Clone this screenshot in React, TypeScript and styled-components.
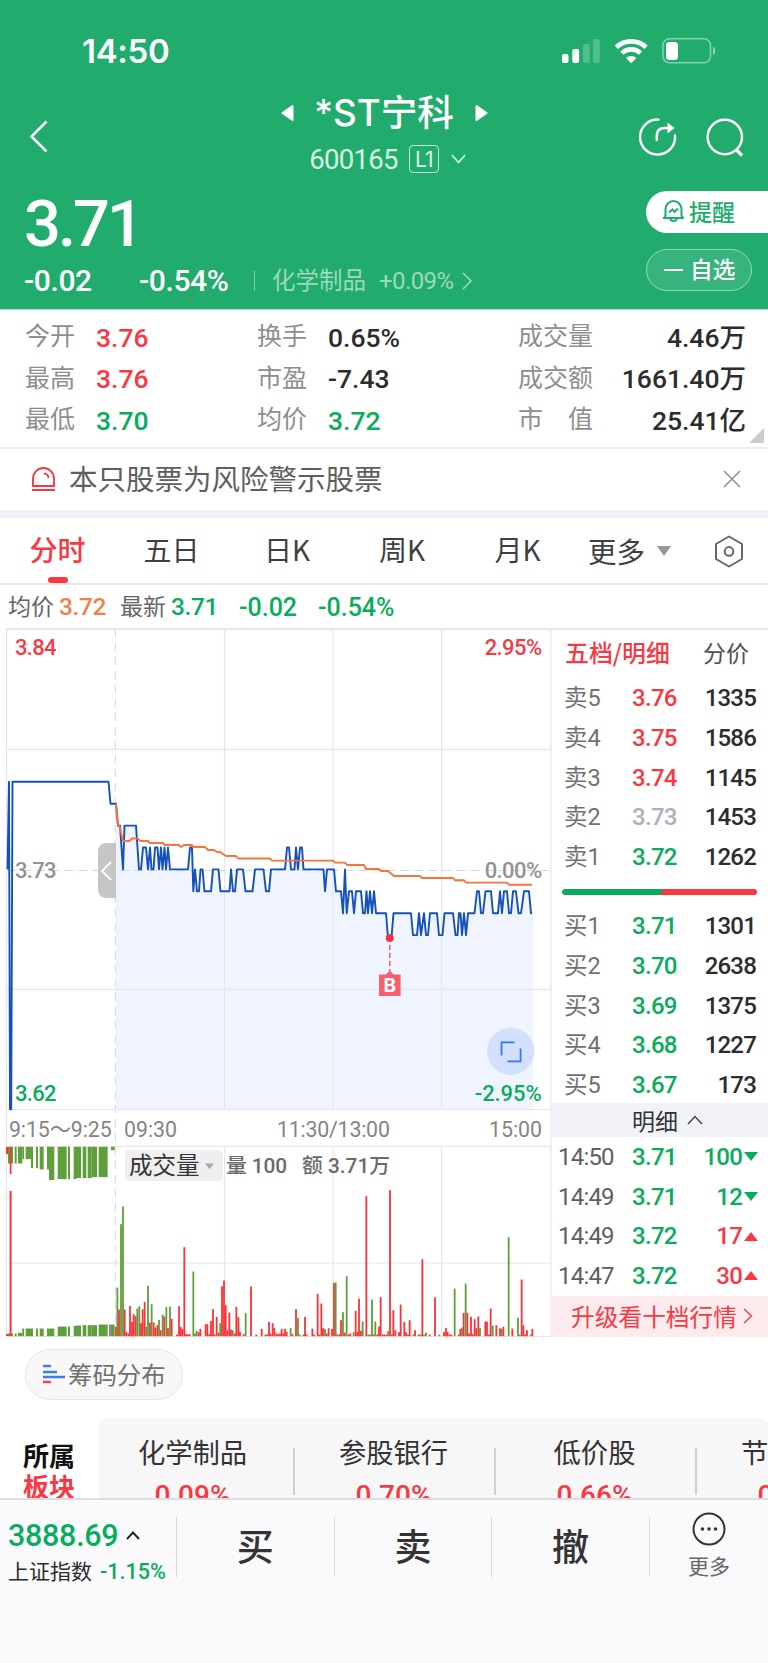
import React from "react";
import styled, { createGlobalStyle } from "styled-components";

const C = {
  green: "#21ac6e",
  up: "#fa3843",
  down: "#08ac5c",
  ink: "#2c2c2c",
  sub: "#666666",
  mute: "#8e8e8e",
  flat: "#a9b1bf",
  line: "#e6e6e6",
};
const CJK = `"Noto Sans CJK SC", sans-serif`;
const NUM = `Roboto, "Noto Sans CJK SC", sans-serif`;

const Global = createGlobalStyle`
  * { box-sizing: border-box; }
  body { margin: 0; background: #fff; font-family: ${CJK}; color: ${C.ink}; }
  svg { display: block; flex: none; }
`;

const Page = styled.main`
  width: 768px;
  height: 1663px;
  overflow: hidden;
  display: flex;
  flex-direction: column;
  background: #fff;
`;

/* Shared number text */
const Num = styled.span<{ $size: number; $color?: string; $weight?: number; $gap?: number }>`
  font-family: ${NUM};
  font-size: ${(p) => p.$size}px;
  line-height: 1;
  font-weight: ${(p) => p.$weight ?? 500};
  letter-spacing: ${(p) => p.$gap ?? 0}px;
  color: ${(p) => p.$color ?? C.ink};
  white-space: nowrap;
`;

/* Header */
const Header = styled.header`
  height: 310px;
  flex: none;
  background: ${C.green};
  color: #fff;
  border-bottom: 1px solid #a8e6cb;
`;
const StatusBar = styled.div`
  height: 88px;
  padding: 14px 51px 0 82px;
  display: flex;
  align-items: center;
  justify-content: space-between;
`;
const Clock = styled.span`
  font: 600 33px/1 Inter, sans-serif;
  letter-spacing: -0.3px;
  padding-top: 1px;
`;
const NavBar = styled.div`
  height: 97px;
  padding: 0 23px 0 29px;
  display: grid;
  grid-template-columns: 119px 1fr 107px;
`;
const NavSide = styled.div`
  display: flex;
  align-items: center;
  justify-content: space-between;
`;
const TitleBlock = styled.div`
  display: flex;
  flex-direction: column;
  align-items: center;
  padding-right: 18px;
`;
const TitleRow = styled.div`
  height: 49px;
  display: flex;
  align-items: center;
  gap: 20px;
`;
const Title = styled.h1`
  margin: 0;
  width: 141px;
  display: flex;
  justify-content: center;
  font: 500 36.7px/49px Inter, ${CJK};
  white-space: nowrap;
`;
const CodeRow = styled.div`
  height: 44px;
  padding: 1px 0 0 7px;
  display: flex;
  align-items: center;
  color: #d9f3e6;
`;
const LevelTag = styled.span`
  width: 30px;
  height: 28px;
  margin: -2px 12px 0 11px;
  border: 1px solid #c9ecdb;
  border-radius: 4px;
  font: 400 21px/27px Inter, sans-serif;
  letter-spacing: -1px;
  text-align: center;
`;
const Quote = styled.div`
  display: grid;
  grid-template-columns: 1fr 122px;
`;
const QuoteMain = styled.div`
  padding-left: 24px;
  display: flex;
  flex-direction: column;
`;
const LastPrice = styled.div`
  height: 76px;
  padding-top: 3px;
  display: flex;
  align-items: center;
`;
const ChangeRow = styled.div`
  height: 40px;
  display: flex;
  align-items: center;
`;
const ChangeCell = styled.div<{ $w: number }>`
  width: ${(p) => p.$w}px;
  flex: none;
`;
const Sector = styled.div`
  border-left: 1px solid #7ccfa7;
  height: 20px;
  padding-left: 17px;
  display: flex;
  align-items: center;
  color: #9bdabc;
`;
const SectorName = styled.span`
  width: 107px;
  font-size: 23.5px;
  line-height: 1;
  margin-top: -2px;
`;
const Actions = styled.div`
  padding-top: 6px;
  display: flex;
  flex-direction: column;
  gap: 16px;
`;
const RemindPill = styled.div`
  height: 42px;
  border-radius: 21px 0 0 21px;
  background: #fff;
  color: ${C.green};
  padding: 0 0 2px 16px;
  display: flex;
  align-items: center;
  gap: 4px;
  font: 500 23px/38px ${CJK};
`;
const WatchPill = styled.div`
  width: 106px;
  height: 42px;
  border: 1px solid #94d7b7;
  border-radius: 21px;
  background: #37b47d;
  padding: 0 0 3px 17px;
  display: flex;
  align-items: center;
  gap: 7px;
  font: 500 22.7px/38px ${CJK};
`;
const Dash = styled.i`
  width: 19px;
  height: 2px;
  margin-top: 3px;
  background: #fff;
`;

/* Statistics */
const Stats = styled.section`
  position: relative;
  height: 139px;
  flex: none;
  padding: 6px 22px 0 25px;
  display: grid;
  grid-template-columns: 232px 261px 228px;
  grid-auto-rows: 41.4px;
  border-bottom: 2px solid #ededed;
`;
const Stat = styled.div<{ $end?: boolean }>`
  display: flex;
  align-items: center;
  justify-content: ${(p) => (p.$end ? "space-between" : "flex-start")};
  & > span:last-child {
    margin-top: 3px;
  }
`;
const StatLabel = styled.span<{ $wide?: boolean }>`
  width: ${(p) => (p.$wide ? "auto" : "71px")};
  font-size: 25px;
  line-height: 36px;
  margin-top: -5px;
  color: ${C.mute};
  white-space: pre;
`;
const Corner = styled.i`
  position: absolute;
  right: 4px;
  bottom: 4px;
  border-left: 15px solid transparent;
  border-bottom: 15px solid #ccc;
`;

/* Notice */
const Notice = styled.section`
  height: 69px;
  flex: none;
  padding: 0 26px 1px 31px;
  border-bottom: 8px solid #f1f2f8;
  display: flex;
  align-items: center;
`;
const NoticeText = styled.p`
  margin: -2px auto 0 13px;
  font-size: 28.5px;
  line-height: 40px;
  color: #5e5e5e;
`;

/* Period tabs */
const Tabs = styled.nav`
  height: 67px;
  flex: none;
  border-bottom: 2px solid #e9e9e9;
  display: flex;
  align-items: stretch;
`;
const Tab = styled.div<{ $active?: boolean; $w: number }>`
  position: relative;
  width: ${(p) => p.$w}px;
  text-align: center;
  font-size: 28px;
  line-height: 63px;
  font-weight: ${(p) => (p.$active ? 500 : 400)};
  color: ${(p) => (p.$active ? C.up : "#404040")};
  &::after {
    content: "";
    display: ${(p) => (p.$active ? "block" : "none")};
    position: absolute;
    left: 48px;
    bottom: 0;
    width: 20px;
    height: 6px;
    border-radius: 3px;
    background: ${C.up};
  }
`;
const MoreTab = styled.div`
  width: 138px;
  padding-left: 11px;
  display: flex;
  align-items: center;
  gap: 12px;
  font-size: 28.5px;
  line-height: 61px;
  color: #404040;
`;
const Caret = styled.i<{ $w: number; $h: number; $color: string; $up?: boolean }>`
  width: 0;
  height: 0;
  border: 0 solid transparent;
  border-left-width: ${(p) => p.$w / 2}px;
  border-right-width: ${(p) => p.$w / 2}px;
  ${(p) => (p.$up ? "border-bottom" : "border-top")}: ${(p) => p.$h}px solid ${(p) => p.$color};
`;
const TabSettings = styled.div`
  display: flex;
  align-items: center;
`;

/* Legend */
const Legend = styled.div`
  height: 43px;
  flex: none;
  padding: 2px 0 0 8px;
  display: flex;
  align-items: center;
`;
const LegendItem = styled.div<{ $w: number }>`
  width: ${(p) => p.$w}px;
  display: flex;
  align-items: center;
  gap: 5px;
`;
const LegendName = styled.span`
  margin-top: -5px;
  font-size: 23px;
  line-height: 34px;
  color: ${C.sub};
`;

/* Chart and order book */
const Market = styled.section`
  height: 709px;
  flex: none;
  display: grid;
  grid-template-columns: 552px 216px;
`;
const Book = styled.aside`
  border-top: 2px solid #e6e6e6;
  display: flex;
  flex-direction: column;
`;
const BookTabs = styled.div`
  height: 48.500px;
  padding: 0 19px 4px 13px;
  display: flex;
  justify-content: space-between;
  align-items: center;
  font-size: 23px;
  line-height: 44px;
  color: #505050;
  & > b {
    font-weight: 500;
    font-size: 23.9px;
    color: ${C.up};
  }
`;
const BookList = styled.div`
  height: 198.500px;
`;
const BookRow = styled.div`
  height: 39.7px;
  padding: 0 12px 0 12px;
  display: grid;
  grid-template-columns: 68px 1fr auto;
  align-items: center;
`;
const BookLabel = styled.span`
  font: 400 23.5px/34px ${NUM};
  color: #717171;
`;
const Ratio = styled.div`
  flex: none;
  height: 6px;
  margin: 11.500px 11px 12px 10px;
  border-radius: 3px;
  background: linear-gradient(120deg, ${C.down} 51%, ${C.up} 51%);
`;
const DetailHead = styled.div`
  height: 34px;
  margin-top: -2px;
  background: #f2f3f9;
  display: flex;
  align-items: center;
  justify-content: center;
  gap: 9px;
  padding: 0 0 1px 15px;
  font-size: 23px;
  line-height: 32px;
  color: #333;
`;
const TradeRow = styled.div`
  height: 39.7px;
  padding: 0 10px 0 6px;
  display: grid;
  grid-template-columns: 74px 1fr auto;
  align-items: center;
`;
const TradeSize = styled.div`
  display: flex;
  align-items: center;
  gap: 2px;
`;
const Upgrade = styled.div`
  height: 41.500px;
  background: #fdecee;
  color: ${C.up};
  display: flex;
  align-items: center;
  justify-content: center;
  gap: 6px;
  padding: 0 0 1px 4px;
  font-size: 23.7px;
  line-height: 38px;
`;

/* Chip distribution and sectors */
const Tools = styled.div`
  height: 81px;
  flex: none;
  padding: 12px 0 0 25px;
`;
const ChipPill = styled.div`
  width: 158px;
  height: 51px;
  border: 1px solid #e6e6e6;
  border-radius: 26px;
  background: #f8f8f8;
  padding: 0 0 2px 17px;
  display: flex;
  align-items: center;
  gap: 3px;
  font-size: 24.4px;
  line-height: 46px;
  color: #707070;
`;
const Boards = styled.section`
  height: 80px;
  flex: none;
  overflow: hidden;
  display: flex;
`;
const BoardsTitle = styled.div`
  width: 99px;
  flex: none;
  padding: 21px 0 0 23px;
  font: 700 26px/31px ${CJK};
  color: #111;
  & > em {
    display: block;
    font-style: normal;
    color: ${C.up};
  }
`;
const BoardStrip = styled.div`
  flex: none;
  width: 669px;
  border-radius: 8px 8px 0 0;
  background: #f7f7f7;
  overflow: hidden;
  display: flex;
  padding-left: 1px;
`;
const Board = styled.div`
  flex: none;
  width: 201px;
  height: 90px;
  padding: 11px 16px 0 0;
  text-align: center;
  font-size: 27.3px;
  line-height: 44px;
  color: #333;
  background: linear-gradient(#d0d0d0, #d0d0d0) 193px 30px / 2px 47px no-repeat;
  display: flex;
  flex-direction: column;
  align-items: center;
  gap: 9px;
`;

/* Bottom trading bar */
const TradeBar = styled.footer`
  flex: 1;
  border-top: 2px solid #dedede;
  background: #fafafc;
  display: flex;
  padding-top: 17px;
`;
const IndexCell = styled.div`
  width: 177px;
  height: 60px;
  border-right: 1px solid #d8d8d8;
  padding: 5px 0 0 8px;
`;
const IndexLine = styled.div<{ $h: number; $gap: number }>`
  height: ${(p) => p.$h}px;
  display: flex;
  align-items: center;
  gap: ${(p) => p.$gap}px;
  white-space: nowrap;
`;
const IndexName = styled.span`
  margin-top: -4px;
  font-size: 21px;
  line-height: 30px;
`;
const TradeButton = styled.div`
  width: 157.6px;
  height: 60px;
  border-right: 1px solid #d8d8d8;
  text-align: center;
  font: 500 37px/57px ${CJK};
  color: #333;
`;
const MoreCell = styled.div`
  flex: 1;
  display: flex;
  flex-direction: column;
  align-items: center;
  margin-top: -5px;
  font-size: 21px;
  line-height: 38px;
  color: #666;
`;

/* Price levels, about 22px apart; the previous close sits at level 0 */
const lv = (n: number) => 869.4 - n * 21.9;
const PRICE: [number, number][] = [
  [7.5, 0], [9, 4], [10, -10.95], [11.2, -10.95], [12.5, 4], [108.5, 4], [110.5, 3], [116, 3], [118, 2], [120, 2], [123, 0],
  [124.5, 2], [136, 2], [139, 0], [141, 0], [143, 1], [146, 1], [148, 0], [150, 1], [151.5, 0], [153.5, 0],
  [155, 1], [157.5, 1], [159, 0], [161, 1], [162.5, 0], [164.5, 1], [166, 0], [168, 1], [170, 0], [188, 0],
  [190, 1], [192, 1], [193.3, -1], [195, 0], [197, -1], [199, -1], [200.5, 0], [202.5, 0], [204.5, -1], [211, -1],
  [213, 0], [218.5, 0], [220.5, -1], [229.5, -1], [231, 0], [233, -1], [235, -1], [237, 0], [243, 0], [245.5, -1],
  [252.5, -1], [255, 0], [263.5, 0], [266, -1], [269, -1], [271, 0], [285, 0], [287, 1], [289, 1], [291, 0],
  [294.5, 0], [296, 1], [298, 0], [300, 1], [302, 1], [303.5, 0], [323.5, 0], [325, -1], [327, 0], [334, 0],
  [336, -1], [341, -1], [343, -2], [345, 0], [346.7, -2], [349, -1], [352, -1], [354, -2], [356, -1], [361, -1],
  [363, -2], [365, -2], [366.5, -1], [368, -2], [370, -1], [372, -2], [374, -1], [376, -2], [386, -2], [388, -3.1],
  [391.5, -3.1], [393.5, -2], [411, -2], [413, -3], [417, -3], [419, -2], [421, -3], [424, -2], [426, -3], [428, -3],
  [430, -2], [437, -2], [439, -3], [442.5, -3], [444.5, -2], [453, -2], [455.5, -3], [457.5, -3], [459, -2], [460.5, -2],
  [462, -3], [464, -2], [466, -3], [468, -2], [474.5, -2], [477, -1], [479, -1], [481, -2], [483, -2], [485.5, -1],
  [491, -1], [493, -2], [498, -2], [500, -1], [502, -2], [504, -1], [507, -1], [509, -2], [511, -2], [513, -1],
  [516, -1], [518.5, -2], [521, -2], [524, -1], [529, -1], [531, -2], [532, -2],
];
const AVERAGE =
  "116,804 117.5,823 120,828 123,841 129.5,841 132,838.5 138,838.5 140,841 148,841 150,843 163,843 165,845 179,845 181,847 184,845 192,845 193,847 205,847 208,850 214,850 217,852 220,852 226,856 236,856 238,858.5 270,858.5 272,860.6 333,860.6 335,862.6 345,862.6 347,865 364,865 366,869 379,869 381,871 388,871 394,876 420,876 422,878 453,878 455,880.3 464,880.3 466,882.6 507,882.6 509,884.7 532,884.7";

/* Volume bars: [x, height] in thirds of a pixel; negative height is a falling bar */
const VOLUME: [number, number][] = [
  [348, 28], [352, -146], [357, 80], [363, -336], [369, -389], [374, 80], [379, 13], [385, 8], [390, 91], [396, 43],
  [401, 66], [407, 61], [412, -83], [418, -90], [423, 39], [428, 81], [434, 103], [439, -28], [444, -151], [450, 41],
  [455, -96], [461, 41], [466, 26], [472, 33], [477, -49], [482, 18], [488, -65], [493, 59], [499, -87], [504, 24],
  [510, -89], [515, 52], [531, 5], [537, 90], [542, 28], [547, 22], [553, 267], [558, 6], [563, 6], [569, 6],
  [580, -194], [585, -8], [590, -16], [596, 12], [601, 22], [617, 36], [622, 36], [628, 6], [633, 46], [639, 81], [644, 5],
  [650, 58], [656, 11], [661, -39], [666, 150], [672, 167], [677, 93], [682, 18], [688, 71], [693, 20], [698, -18],
  [704, 8], [709, 88], [715, 57], [720, 13], [731, 6], [737, -70], [753, 149], [769, 5], [785, 22], [796, -5],
  [801, 5], [807, 43], [812, 8], [818, 39], [823, 25], [829, 8], [834, 6], [840, 8], [845, 22], [850, 8], [855, 22],
  [860, 13], [872, -25], [877, 6], [888, 81], [894, -55], [899, -5], [910, -5], [915, 58], [920, 5], [937, 23],
  [942, 5], [953, 127], [958, 5], [964, 98], [969, 24], [975, -22], [980, 8], [986, 24], [996, 22], [1002, 160],
  [1007, -161], [1012, 5], [1018, 5], [1023, 48], [1029, -72], [1034, 11], [1040, -180], [1046, 5], [1051, 8],
  [1061, -12], [1067, 76], [1072, 13], [1077, 113], [1083, 16], [1088, -44], [1099, 420], [1105, -5], [1110, -5],
  [1116, -110], [1121, 5], [1126, -44], [1132, 5], [1137, 29], [1142, 117], [1148, 5], [1153, 5], [1159, 5],
  [1164, -15], [1170, 438], [1175, 5], [1180, 78], [1186, 18], [1197, 12], [1202, 95], [1213, 43], [1218, 12],
  [1224, 5], [1229, 48], [1240, -5], [1245, 18], [1256, 5], [1262, -5], [1267, 231], [1272, -5], [1278, -11],
  [1289, 5], [1305, 117], [1318, -5], [1332, 13], [1338, 25], [1343, 13], [1349, 5], [1354, 5], [1364, -143],
  [1376, 5], [1381, 22], [1386, -26], [1391, 70], [1397, -158], [1402, 70], [1407, 8], [1413, 58], [1418, 6],
  [1424, 51], [1429, 24], [1435, 59], [1440, -24], [1456, 44], [1461, 44], [1467, 5], [1472, 83], [1478, -32],
  [1489, 33], [1500, 24], [1505, -22], [1510, 28], [1526, -297], [1537, 23], [1554, -55], [1559, -5], [1565, 170],
  [1570, 33], [1575, 5], [1581, 18], [1592, -5], [1597, 22],
];
/* Call auction bars: [from, to, depth below the top edge, height above the base] */
const AUCTION: [number, number, number, number][] = [
  [24, 39, 50, 8], [44, 50, 50, 8], [54, 67, 50, 10], [67, 72, 37, 23], [77, 93, 37, 23], [93, 99, 64, 23],
  [108, 114, 64, 23], [119, 131, 68, 23], [141, 147, 68, 23], [147, 163, 100, 23], [173, 200, 97, 29],
  [204, 210, 97, 29], [221, 228, 97, 31], [228, 243, 94, 32], [248, 259, 94, 33], [263, 275, 94, 33],
  [275, 291, 91, 33], [296, 323, 91, 35], [333, 344, 10, 35],
];
const BASE = 1336.2;

type LabelProps = { x: number; y: number; size: number; color: string; end?: boolean; gap?: number; weight?: number; children: React.ReactNode };
const Label = ({ x, y, size, color, end, gap = 0, weight = 500, children }: LabelProps) => (
  <text x={x} y={y} fontSize={size} fill={color} fontFamily={NUM} fontWeight={weight} letterSpacing={gap} textAnchor={end ? "end" : "start"}>
    {children}
  </text>
);

const Chart = () => {
  const line = PRICE.map(([x, n]) => `${x},${lv(n).toFixed(1)}`).join(" ");
  const area = PRICE.slice(7).map(([x, n]) => `${x},${lv(n).toFixed(1)}`).join(" ");
  return (
    <svg width="552" height="709" viewBox="0 628 552 709">
      <polygon points={`116,1109 ${area} 533,913 533,1109`} fill="#eff4ff" />
      <g stroke={C.line} strokeWidth="1.2" fill="none">
        <path d="M6 629H552" strokeWidth="2" />
        <path d="M6.6 629V1337M550.8 629V1337" strokeWidth="1.3" />
        <path d="M7 749.4H551M7 989.3H551M7 1109.5H551M7 1146.4H551M7 1263H551M7 1336.5H551" />
        <path d="M224.5 629V1109M333 629V1109M441.6 629V1109M224.5 1147V1336M333 1147V1336M441.6 1147V1336" />
        <path d="M115.4 629V1336" strokeDasharray="8 6" stroke="#dedede" />
        <path d="M8 870.5H551" stroke="#cfdbe8" strokeDasharray="9 5" />
      </g>
      <path d="M116 843V898H106a8 8 0 0 1-8-8V851a8 8 0 0 1 8-8Z" fill="#c6c6c6" />
      <path d="M111 862l-9 9 9 9" fill="none" stroke="#fff" strokeWidth="1.8" />
      <polyline points={line} fill="none" stroke="#1451bb" strokeWidth="1.9" strokeLinejoin="round" />
      <polyline points={AVERAGE} fill="none" stroke="#fb7338" strokeWidth="1.9" strokeLinejoin="round" />

      <Label x={15} y={654.5} size={22} gap={-0.7} color={C.up}>3.84</Label>
      <Label x={541.5} y={654.5} size={22} gap={-0.6} color={C.up} end>2.95%</Label>
      <Label x={15} y={878} size={22} gap={-0.7} color="#929292">3.73</Label>
      <Label x={541.5} y={878} size={22} gap={-0.6} color="#929292" end>0.00%</Label>
      <Label x={15} y={1101} size={22} gap={-0.7} color={C.down}>3.62</Label>
      <Label x={541.5} y={1101} size={22} gap={-0.1} color={C.down} end>-2.95%</Label>

      <circle cx="389.7" cy="938" r="4" fill="#f5323e" />
      <path d="M389.8 945V971" stroke="#e8505c" strokeWidth="1.4" strokeDasharray="5 3" />
      <path d="M379 974.5H386L389.8 970.5L393.6 974.5H400.6V996H379Z" fill="#f85f6b" />
      <text x="389.8" y="992" textAnchor="middle" fontFamily="Inter, sans-serif" fontWeight="700" fontSize="19" fill="#fff">B</text>

      <circle cx="510.7" cy="1051.3" r="23.6" fill="#d2e0fd" />
      <path d="M501.5 1055.5V1042.3H514.5M520.6 1048.5V1061.4H507.5" fill="none" stroke="#2f78f6" strokeWidth="1.8" />

      <Label x={9} y={1136.7} size={21.3} color="#848484" weight={400} gap={-0.1}>9:15～9:25</Label>
      <Label x={124} y={1136.7} size={21.3} color="#848484" weight={400}>09:30</Label>
      <Label x={277} y={1136.7} size={21.3} color="#848484" weight={400} gap={-0.2}>11:30/13:00</Label>
      <Label x={542} y={1136.7} size={21.3} color="#848484" weight={400} end>15:00</Label>

      {AUCTION.map(([a, b, d, h]) => (
        <g key={a} fill="#5f9f3b">
          <rect x={a / 3} y={1146.8} width={(b - a) / 3} height={d / 3} />
          <rect x={a / 3} y={BASE - h / 3} width={(b - a) / 3} height={h / 3} />
        </g>
      ))}
      <path d="M6 1147h2v7h-2zM9.8 1147h1.7v27h-1.7zM9.6 1191h2v145h-2zM6 1334h2.2v2h-2.2z" fill="#fb3236" />
      <rect x="109" y="1324.5" width="2.4" height="11.7" fill="#8b8b8b" />
      {VOLUME.map(([x, h]) => (
        <rect key={x} x={x / 3 - 0.9} y={BASE - Math.abs(h) / 3} width="1.8" height={Math.abs(h) / 3} fill={h > 0 ? "#fb3236" : "#5f9f3b"} />
      ))}

      <rect x="125" y="1150" width="98" height="31" rx="4" fill="#efefef" />
      <text x="129" y="1174" fontFamily={CJK} fontSize="23.5" fill="#333">成交量</text>
      <path d="M205 1163.5h9l-4.5 5.5z" fill="#a8a8a8" />
      <Label x={226} y={1173} size={20.8} gap={-0.1} color="#6a6a6a">量 100</Label>
      <Label x={302} y={1173} size={20.8} color="#6a6a6a">额 3.71万</Label>
    </svg>
  );
};

type BookEntry = [string, string, string, string];
const SELL: BookEntry[] = [
  ["卖5", "3.76", C.up, "1335"],
  ["卖4", "3.75", C.up, "1586"],
  ["卖3", "3.74", C.up, "1145"],
  ["卖2", "3.73", C.flat, "1453"],
  ["卖1", "3.72", C.down, "1262"],
];
const BUY: BookEntry[] = [
  ["买1", "3.71", C.down, "1301"],
  ["买2", "3.70", C.down, "2638"],
  ["买3", "3.69", C.down, "1375"],
  ["买4", "3.68", C.down, "1227"],
  ["买5", "3.67", C.down, "173"],
];
const TRADES: [string, string, string, boolean][] = [
  ["14:50", "3.71", "100", false],
  ["14:49", "3.71", "12", false],
  ["14:49", "3.72", "17", true],
  ["14:47", "3.72", "30", true],
];
const STATS: [string, string, string][] = [
  ["今开", "3.76", C.up], ["换手", "0.65%", C.ink], ["成交量", "4.46万", C.ink],
  ["最高", "3.76", C.up], ["市盈", "-7.43", C.ink], ["成交额", "1661.40万", C.ink],
  ["最低", "3.70", C.down], ["均价", "3.72", C.down], ["市　值", "25.41亿", C.ink],
];
const BOARDS: [string, string][] = [
  ["化学制品", "0.09%"], ["参股银行", "0.70%"], ["低价股", "0.66%"], ["节能环保", "0.52%"],
];

const Levels = ({ rows }: { rows: BookEntry[] }) => (
  <BookList>
    {rows.map(([label, price, color, size]) => (
      <BookRow key={label}>
        <BookLabel>{label}</BookLabel>
        <Num $size={24} $gap={-0.7} $color={color}>{price}</Num>
        <Num $size={24} $gap={-0.8}>{size}</Num>
      </BookRow>
    ))}
  </BookList>
);

export default function App() {
  return (
    <Page>
      <Global />
      <Header>
        <StatusBar>
          <Clock>14:50</Clock>
          <svg width="156" height="28" viewBox="561 37 156 28">
            <rect x="562" y="54" width="6.5" height="9" rx="2" fill="#fff" />
            <rect x="572.3" y="49" width="6.8" height="14" rx="2" fill="#fff" />
            <rect x="583" y="44" width="6.8" height="19" rx="2" fill="#fff" opacity=".22" />
            <rect x="593" y="39" width="6.8" height="24" rx="2" fill="#fff" opacity=".22" />
            <g fill="none" stroke="#fff" strokeWidth="4.6">
              <path d="M616.3 47.2a22 22 0 0 1 29.8 0" />
              <path d="M621.9 53.1a13.6 13.6 0 0 1 18.6 0" />
            </g>
            <path d="M626 58a7.6 7.6 0 0 1 10.4 0L631.2 63.2Z" fill="#fff" />
            <rect x="663" y="38.8" width="47.5" height="24" rx="6.5" fill="none" stroke="#fff" strokeWidth="1.5" opacity=".45" />
            <rect x="666" y="42" width="12" height="18" rx="3.5" fill="#fff" />
            <path d="M713 47c3 1 3 7 0 8z" fill="#fff" opacity=".5" />
          </svg>
        </StatusBar>
        <NavBar>
          <NavSide>
            <svg width="20" height="34" viewBox="0 0 20 34">
              <path d="M17.5 1.5L2.5 16.5L17.5 31.5" fill="none" stroke="#fff" strokeWidth="2.5" />
            </svg>
          </NavSide>
          <TitleBlock>
            <TitleRow>
              <svg width="13" height="18" viewBox="0 0 13 18"><path d="M11.5 2V16L1.5 9Z" fill="#fff" stroke="#fff" strokeWidth="2" strokeLinejoin="round" /></svg>
              <Title>*ST宁科</Title>
              <svg width="13" height="18" viewBox="0 0 13 18"><path d="M1.5 2V16L11.5 9Z" fill="#fff" stroke="#fff" strokeWidth="2" strokeLinejoin="round" /></svg>
            </TitleRow>
            <CodeRow>
              <Num $size={27.5} $weight={400} $gap={-0.7} $color="#d9f3e6">600165</Num>
              <LevelTag>L1</LevelTag>
              <svg width="15" height="12" viewBox="0 0 15 12"><path d="M1 1L7.5 8.5L14 1" fill="none" stroke="#d9f3e6" strokeWidth="1.7" /></svg>
            </CodeRow>
          </TitleBlock>
          <NavSide>
            <svg width="40" height="40" viewBox="638 116 40 40">
              <path d="M658.5 118.6A17.5 17.5 0 1 0 675 134.5" fill="none" stroke="#fff" strokeWidth="2.4" strokeLinecap="round" />
              <path d="M656.8 139V135C656.8 129.5 659 127 664.5 127H671" fill="none" stroke="#fff" strokeWidth="2.5" strokeLinecap="round" />
              <path d="M667.5 121.5L674.5 127L667.5 132.5Z" fill="#fff" />
            </svg>
            <svg width="40" height="40" viewBox="705 116 40 40">
              <circle cx="724.8" cy="136" r="17.2" fill="none" stroke="#fff" strokeWidth="2.4" />
              <path d="M736 148.500L742 154.500" stroke="#fff" strokeWidth="3.2" />
            </svg>
          </NavSide>
        </NavBar>
        <Quote>
          <QuoteMain>
            <LastPrice><Num $size={65} $color="#fff" $gap={-3}>3.71</Num></LastPrice>
            <ChangeRow>
              <ChangeCell $w={115}><Num $size={30} $color="#fff" $gap={-0.4}>-0.02</Num></ChangeCell>
              <ChangeCell $w={115}><Num $size={30} $color="#fff" $gap={-0.4}>-0.54%</Num></ChangeCell>
              <Sector>
                <SectorName>化学制品</SectorName>
                <Num $size={24} $weight={400} $color="#9bdabc" $gap={-0.6}>+0.09%</Num>
                <svg width="20" height="20" viewBox="0 0 20 20"><path d="M10 2L18 10L10 18" fill="none" stroke="#9bdabc" strokeWidth="1.6" /></svg>
              </Sector>
            </ChangeRow>
          </QuoteMain>
          <Actions>
            <RemindPill>
              <svg width="23" height="24" viewBox="0 0 23 24" fill="none" stroke={C.green} strokeWidth="2">
                <path d="M3.5 17V10.5a8 8.5 0 0 1 16 0V17" />
                <path d="M1.5 19C3 18.6 3.5 18 3.5 16.5M21.5 19C20 18.6 19.5 18 19.5 16.5M1 19H22" />
                <path d="M8 20a3.7 3 0 0 0 7 0" />
                <path d="M7 13.5L10.5 10.5L12.5 13L16 9.5" />
              </svg>
              提醒
            </RemindPill>
            <WatchPill><Dash />自选</WatchPill>
          </Actions>
        </Quote>
      </Header>

      <Stats>
        {STATS.map(([label, value, color], i) => (
          <Stat key={label} $end={i % 3 === 2}>
            <StatLabel $wide={i % 3 === 2}>{label}</StatLabel>
            <Num $size={26.5} $color={color}>{value}</Num>
          </Stat>
        ))}
        <Corner />
      </Stats>

      <Notice>
        <svg width="25" height="26" viewBox="0 0 25 26" fill="none" stroke={C.up} strokeWidth="1.9">
          <path d="M2 20V12.5a10.5 10.5 0 0 1 21 0V20ZM1 24H24" />
          <path d="M13 7.5a4.5 4.5 0 0 1 4.5 4.5" />
        </svg>
        <NoticeText>本只股票为风险警示股票</NoticeText>
        <svg width="20" height="20" viewBox="0 0 20 20"><path d="M2 2L18 18M18 2L2 18" stroke="#929292" strokeWidth="1.6" /></svg>
      </Notice>

      <Tabs>
        <Tab $w={115} $active>分时</Tab>
        <Tab $w={113}>五日</Tab>
        <Tab $w={118}>日K</Tab>
        <Tab $w={112}>周K</Tab>
        <Tab $w={119}>月K</Tab>
        <MoreTab>
          更多
          <Caret $w={14} $h={10} $color="#979797" />
        </MoreTab>
        <TabSettings>
          <svg width="28" height="34" viewBox="715 533 28 34">
            <path d="M729 535.5L742 543V558L729 565.5L716 558V543Z" fill="none" stroke="#666" strokeWidth="2" strokeLinejoin="round" />
            <circle cx="729" cy="550.4" r="4.3" fill="none" stroke="#666" strokeWidth="2" />
          </svg>
        </TabSettings>
      </Tabs>

      <Legend>
        <LegendItem $w={112}><LegendName>均价</LegendName><Num $size={24.5} $gap={-0.4} $color="#f07f4a">3.72</Num></LegendItem>
        <LegendItem $w={119}><LegendName>最新</LegendName><Num $size={24.5} $gap={-0.4} $color={C.down}>3.71</Num></LegendItem>
        <LegendItem $w={79}><Num $size={25} $color={C.down}>-0.02</Num></LegendItem>
        <LegendItem $w={90}><Num $size={25} $color={C.down}>-0.54%</Num></LegendItem>
      </Legend>

      <Market>
        <Chart />
        <Book>
          <BookTabs><b>五档/明细</b><span>分价</span></BookTabs>
          <Levels rows={SELL} />
          <Ratio />
          <Levels rows={BUY} />
          <DetailHead>
            明细
            <svg width="16" height="10" viewBox="0 0 16 10"><path d="M1 9L8 1.5L15 9" fill="none" stroke="#444" strokeWidth="1.5" /></svg>
          </DetailHead>
          {TRADES.map(([time, price, size, up], i) => (
            <TradeRow key={i}>
              <Num $size={24} $weight={400} $color="#606060" $gap={-0.8}>{time}</Num>
              <Num $size={24} $gap={-0.7} $color={C.down}>{price}</Num>
              <TradeSize>
                <Num $size={24} $color={up ? C.up : C.down} $gap={-0.8}>{size}</Num>
                <Caret $w={14} $h={9} $color={up ? C.up : C.down} $up={up} />
              </TradeSize>
            </TradeRow>
          ))}
          <Upgrade>
            升级看十档行情
            <svg width="10" height="16" viewBox="0 0 10 16"><path d="M1 1L8.5 8L1 15" fill="none" stroke={C.up} strokeWidth="1.4" /></svg>
          </Upgrade>
        </Book>
      </Market>

      <Tools>
        <ChipPill>
          <svg width="22" height="20" viewBox="0 0 22 20" strokeWidth="2.4">
            <path d="M0 2H8M0 8H14M0 13H22" stroke="#3b7cf7" />
            <path d="M0 18H8" stroke="#f0444f" />
          </svg>
          筹码分布
        </ChipPill>
      </Tools>

      <Boards>
        <BoardsTitle>所属<em>板块</em></BoardsTitle>
        <BoardStrip>
          {BOARDS.map(([name, pct]) => (
            <Board key={name}>{name}<Num $size={28} $color={C.up}>{pct}</Num></Board>
          ))}
        </BoardStrip>
      </Boards>

      <TradeBar>
        <IndexCell>
          <IndexLine $h={29} $gap={8}>
            <Num $size={30.5} $gap={-0.3} $color={C.down}>3888.69</Num>
            <svg width="14" height="12" viewBox="0 0 14 12"><path d="M1 8L7 1.5L13 8" fill="none" stroke="#222" strokeWidth="1.9" /></svg>
          </IndexLine>
          <IndexLine $h={41} $gap={8}>
            <IndexName>上证指数</IndexName>
            <Num $size={21.5} $color={C.down}>-1.15%</Num>
          </IndexLine>
        </IndexCell>
        <TradeButton>买</TradeButton>
        <TradeButton>卖</TradeButton>
        <TradeButton>撤</TradeButton>
        <MoreCell>
          <svg width="34" height="34" viewBox="0 0 34 34">
            <circle cx="17" cy="17" r="15.5" fill="none" stroke="#333" strokeWidth="2" />
            <g fill="#333"><circle cx="10.5" cy="17" r="1.8" /><circle cx="17" cy="17" r="1.8" /><circle cx="23.5" cy="17" r="1.8" /></g>
          </svg>
          更多
        </MoreCell>
      </TradeBar>
    </Page>
  );
}
